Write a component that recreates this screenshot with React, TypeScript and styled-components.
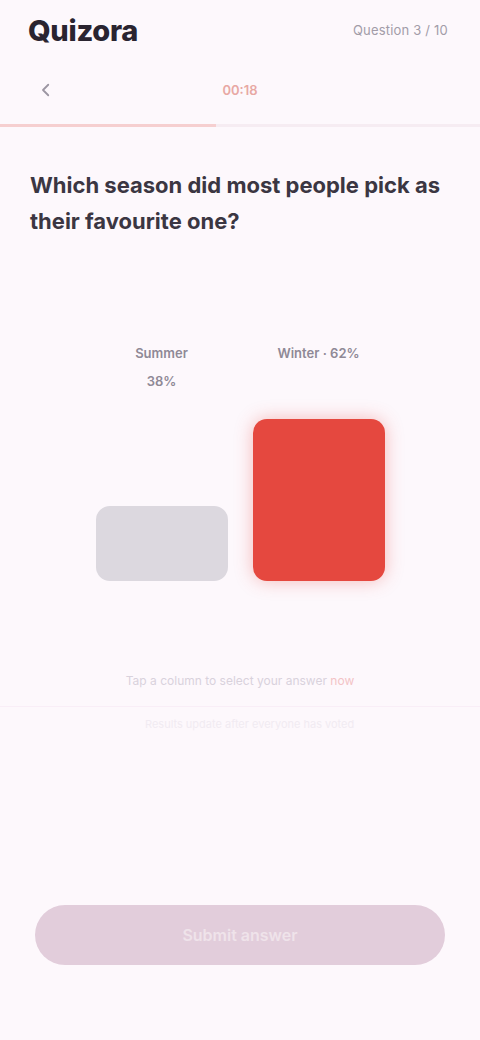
import styled, { createGlobalStyle } from "styled-components";

const GlobalStyle = createGlobalStyle`
  html, body {
    margin: 0;
    padding: 0;
    background: #fdf8fc;
  }
  body {
    font-family: Inter, "Noto Sans", sans-serif;
    color: #2d2834;
  }
`;

const Screen = styled.div`
  width: 480px;
  height: 1040px;
  display: flex;
  flex-direction: column;
  background: #fdf8fc;
  overflow: hidden;
`;

const Header = styled.header`
  height: 60px;
  padding: 0 32px 0 28px;
  display: flex;
  align-items: center;
  justify-content: space-between;
`;

const Logo = styled.div`
  font-size: 29px;
  font-weight: 800;
  letter-spacing: -0.3px;
  color: #2a2430;
`;

const Counter = styled.div`
  font-size: 13px;
  color: #a29ca8;
  letter-spacing: 0.2px;
`;

const NavRow = styled.div`
  height: 60px;
  padding: 0 34px;
  display: flex;
  align-items: center;
`;

const BackButton = styled.button`
  border: 0;
  background: transparent;
  padding: 0;
  width: 24px;
  height: 24px;
  display: flex;
  align-items: center;
  justify-content: center;
  color: #9c96a2;
`;

const Timer = styled.div`
  flex: 1;
  text-align: center;
  margin-right: 24px;
  font-size: 13px;
  font-weight: 600;
  color: #e8a8a4;
`;

const ProgressTrack = styled.div`
  height: 3px;
  background: #f6ecf2;
  margin-top: 4px;
`;

const ProgressFill = styled.div`
  height: 100%;
  background: #f6cfd0;
`;

const Question = styled.h1`
  margin: 40px 40px 0 30px;
  font-size: 22px;
  line-height: 36px;
  font-weight: 700;
  color: #3b3642;
`;

const Chart = styled.div`
  margin-top: 100px;
  display: flex;
  justify-content: center;
  gap: 25px;
  height: 242px;
`;

const Column = styled.div`
  width: 132px;
  display: flex;
  flex-direction: column;
  align-items: center;
`;

const Label = styled.div`
  font-size: 13px;
  line-height: 28px;
  font-weight: 600;
  color: #8f8996;
  text-align: center;
  height: 68px;
`;

const BarWrap = styled.div`
  flex: 1;
  width: 100%;
  display: flex;
  align-items: flex-end;
`;

const Bar = styled.div<{ $active?: boolean }>`
  width: 100%;
  border-radius: 14px;
  background: ${(p) => (p.$active ? "#e5483f" : "#dcd8df")};
  box-shadow: ${(p) => (p.$active ? "0 0 18px rgba(229, 72, 63, 0.35)" : "none")};
`;

const Hint = styled.p`
  margin: 92px 0 0;
  text-align: center;
  font-size: 12px;
  color: #d9d2dc;

  span {
    color: #f3c3c6;
  }
`;

const Divider = styled.div`
  margin-top: 18px;
  height: 1px;
  background: #f9eef7;
`;

const SubHint = styled.p`
  margin: 10px 40px 0 145px;
  font-size: 11px;
  color: #f1ebf2;
`;

const Spacer = styled.div`
  flex: 1;
`;

const Footer = styled.div`
  padding: 0 35px 75px;
`;

const SubmitButton = styled.button`
  width: 100%;
  height: 60px;
  border: 0;
  border-radius: 30px;
  background: #e2cddb;
  color: #efe3ea;
  font-family: Inter, "Noto Sans", sans-serif;
  font-size: 16px;
  font-weight: 600;
`;

export default function App() {
  const progress = 45;
  const bars = [
    { label: ["Summer", "38%"], height: 75 },
    { label: ["Winter · 62%"], height: 162, active: true },
  ];

  return (
    <>
      <GlobalStyle />
      <Screen>
        <Header>
          <Logo>Quizora</Logo>
          <Counter>Question 3 / 10</Counter>
        </Header>
        <NavRow>
          <BackButton aria-label="Back">
            <svg width="18" height="18" viewBox="0 0 24 24" fill="none" stroke="currentColor" strokeWidth="2.4" strokeLinecap="round" strokeLinejoin="round">
              <path d="M15 5l-7 7 7 7" />
            </svg>
          </BackButton>
          <Timer>00:18</Timer>
        </NavRow>
        <ProgressTrack>
          <ProgressFill style={{ width: `${progress}%` }} />
        </ProgressTrack>
        <Question>Which season did most people pick as their favourite one?</Question>
        <Chart>
          {bars.map((b, i) => (
            <Column key={i}>
              <Label>
                {b.label.map((l) => (
                  <div key={l}>{l}</div>
                ))}
              </Label>
              <BarWrap>
                <Bar $active={b.active} style={{ height: b.height }} />
              </BarWrap>
            </Column>
          ))}
        </Chart>
        <Hint>
          Tap a column to select your answer <span>now</span>
        </Hint>
        <Divider />
        <SubHint>Results update after everyone has voted</SubHint>
        <Spacer />
        <Footer>
          <SubmitButton disabled>Submit answer</SubmitButton>
        </Footer>
      </Screen>
    </>
  );
}
